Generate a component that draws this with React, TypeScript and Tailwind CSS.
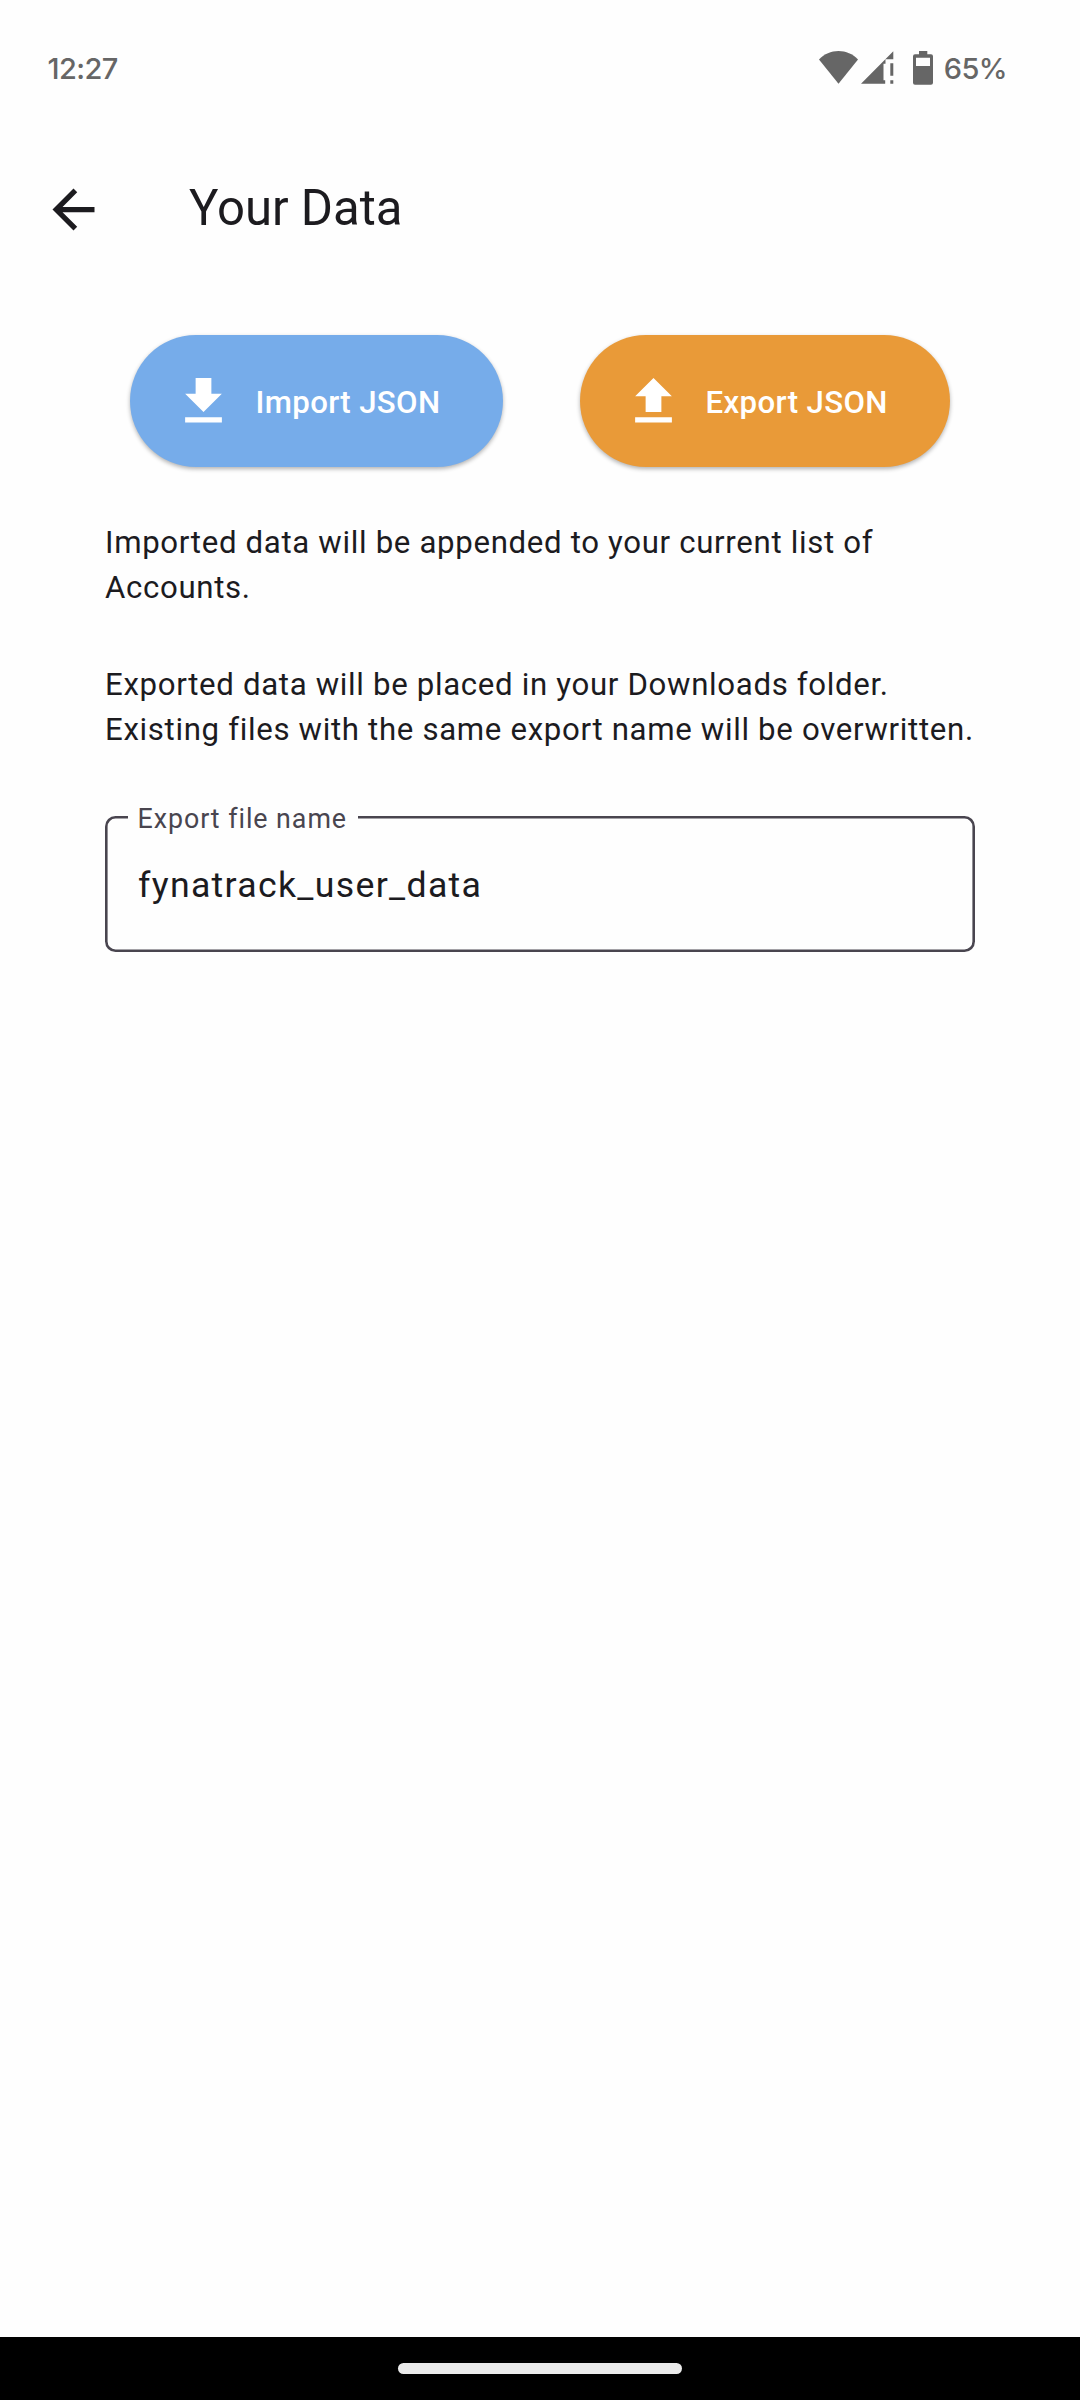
import React from 'react';

function StatusIcons() {
  return (
    <div className="flex h-12 items-start pt-[7px] text-[#666666]">
      <svg className="h-[33px] w-[39px]" viewBox="0 0 39 33" fill="currentColor" aria-hidden="true">
        <path d="M0 8.4C5.4 2.9 12 0 19.5 0S33.600 2.900 39 8.400L19.500 32.700Z" />
      </svg>
      <svg className="ml-[3.500px] h-[33px] w-[32.500px]" viewBox="0 0 32.5 33" fill="currentColor" aria-hidden="true">
        <path d="M0 32.700 32.300 0.300V8.300H24.500V12.800H22.500V29.300H24.200V32.700Z" />
        <path d="M29.300 12.300h3v12.500h-3zM29.300 29.300h3v3.400h-3z" />
      </svg>
      <svg className="ml-[19px] h-[34px] w-5" viewBox="0 0 20 34" fill="currentColor" aria-hidden="true">
        <path
          fillRule="evenodd"
          d="M6 0h8.300v3.300H18q2 0 2 2V31.700q0 2-2 2H2q-2 0-2-2V5.300q0-2 2-2H6ZM3 6.700V15H17V6.700Z"
        />
      </svg>
    </div>
  );
}

function StatusBar() {
  return (
    <header className="flex h-[136px] items-start justify-between pt-11 pr-[73px] pl-[47.500px] font-['Inter',sans-serif] text-[29px] leading-[50px] font-medium text-[#666666]">
      <span className="tracking-[-0.55px]">12:27</span>
      <div className="flex">
        <StatusIcons />
        <span className="ml-[11px] tracking-[-0.6px]">65%</span>
      </div>
    </header>
  );
}

function TopBar() {
  return (
    <div className="flex h-[147px] items-center pl-[42px]">
      <button aria-label="Back">
        <svg className="size-[63px]" viewBox="0 0 24 24" fill="currentColor" aria-hidden="true">
          <path d="M20 11H7.830l5.590-5.590L12 4l-8 8 8 8 1.410-1.410L7.830 13H20v-2z" />
        </svg>
      </button>
      <h1 className="mb-1 ml-[84px] text-[49.100px] leading-[62px]">Your Data</h1>
    </div>
  );
}

const buttonBase =
  'flex h-[131.7px] items-center rounded-full pt-px pl-[42px] text-[31.2px] leading-[45px] font-medium tracking-[0.35px] text-white shadow-[0_2px_4px_rgba(0,0,0,0.3)]';

function Actions() {
  return (
    <div className="flex gap-[76.700px] pt-[52.200px] pl-[24.600px]">
      <button className={`${buttonBase} w-[373.300px] bg-[#76acea]`}>
        <svg className="mr-[21px] size-[63px]" viewBox="0 0 24 24" fill="currentColor" aria-hidden="true">
          <path d="M19 9h-4V3H9v6H5l7 7 7-7zM5 18v2h14v-2H5z" />
        </svg>
        <span className="pt-[2px]">Import JSON</span>
      </button>
      <button className={`${buttonBase} w-[370.800px] bg-[#e99a38]`}>
        <svg className="mr-[21px] size-[63px]" viewBox="0 0 24 24" fill="currentColor" aria-hidden="true">
          <path d="M5 20h14v-2H5v2zm0-10h4v6h6v-6h4l-7-7-7 7z" />
        </svg>
        <span className="pt-[2px]">Export JSON</span>
      </button>
    </div>
  );
}

function ExportNameField() {
  return (
    <div className="relative mt-[63.700px] flex h-[136.700px] items-center rounded-[10.500px] pt-[2px] pl-[33px] shadow-[inset_0_0_0_2.600px_#49454f]">
      <label className="absolute -top-[15px] left-[22.500px] bg-[#fefefe] pr-[11px] pl-[10px] text-[26.800px] leading-9 tracking-[0.950px] text-[#49454f]">
        Export file name
      </label>
      <span className="text-[35.700px] leading-[54px] tracking-[1.300px]">fynatrack_user_data</span>
    </div>
  );
}

export default function App() {
  return (
    <div className="flex h-[2400px] w-[1080px] flex-col bg-[#fefefe] font-['Roboto',sans-serif] text-[#1c1b1f]">
      <StatusBar />
      <TopBar />
      <main className="flex-1 px-[105px]">
        <Actions />
        <div className="mt-[53.100px] -mr-4 flex flex-col gap-[52px] text-[31.200px] leading-[45px] tracking-[0.670px]">
          <p>
            Imported data will be appended to your current list of
            <br />
            Accounts.
          </p>
          <p>
            Exported data will be placed in your Downloads folder.
            <br />
            Existing files with the same export name will be overwritten.
          </p>
        </div>
        <ExportNameField />
      </main>
      <nav className="flex h-[63px] justify-center bg-black pt-[26px]">
        <div className="h-[11px] w-[284px] rounded-full bg-[#ebebeb]" />
      </nav>
    </div>
  );
}
